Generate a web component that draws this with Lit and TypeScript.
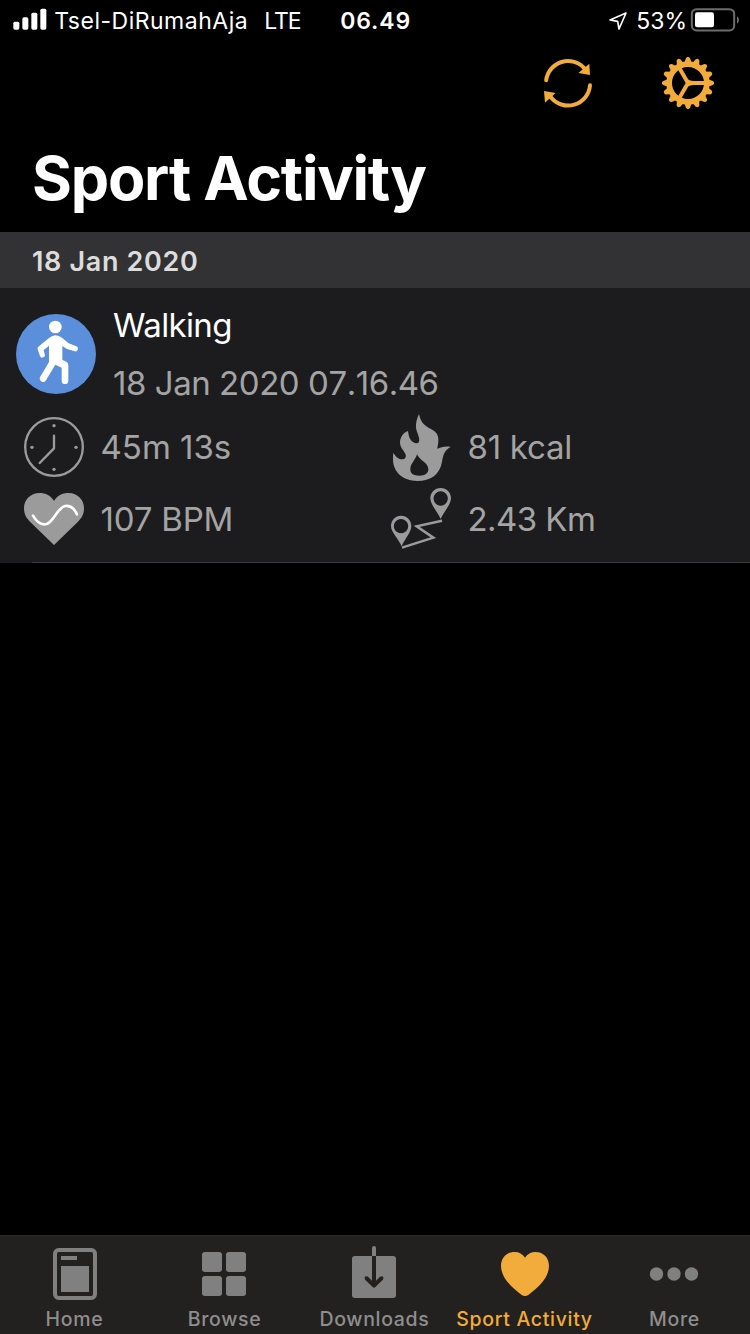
import { LitElement, html, svg, css } from "lit";
import { customElement } from "lit/decorators.js";

const gearPath = (() => {
  const cx = 504, cy = 114, n = 16;
  const pt = (r: number, deg: number) => {
    const a = (deg * Math.PI) / 180;
    return `${(cx + r * Math.cos(a)).toFixed(1)},${(cy + r * Math.sin(a)).toFixed(1)}`;
  };
  const out: string[] = [];
  for (let i = 0; i < n; i++) {
    const a = (i * 360) / n;
    out.push(pt(65, a - 8.5), pt(75, a - 4.6), pt(78, a - 1.5), pt(78, a + 1.5), pt(75, a + 4.6), pt(65, a + 8.5));
  }
  return `M${out.join("L")}Z M456,114 a48,48 0 1 0 96,0 a48,48 0 1 0 -96,0Z`;
})();

const icons = {
  signal: svg`<svg class="ic" width="34" height="24" viewBox="38 22 102 72" fill="#fff">
    <rect x="39" y="66" width="18" height="24" rx="5"/><rect x="66" y="53" width="18" height="37" rx="5"/>
    <rect x="93" y="39" width="18" height="51" rx="5"/><rect x="120" y="27" width="18" height="63" rx="5"/></svg>`,
  location: svg`<svg class="ic" width="22" height="22" viewBox="862 30 66 66" fill="none" stroke="#fff" stroke-width="5" stroke-linejoin="round">
    <path d="M871,60 L919,39 L898,87 L894,64Z"/></svg>`,
  battery: svg`<svg class="ic" width="50" height="26" viewBox="1110 20 150 78">
    <rect x="1115.500" y="26.500" width="127" height="64" rx="14" fill="none" stroke="#6c6c6c" stroke-width="6"/>
    <rect x="1125" y="36" width="57" height="45" rx="7" fill="#fff"/>
    <path d="M1251,48 q6,3 6,11 q0,8 -6,11Z" fill="#6c6c6c"/></svg>`,
  refresh: svg`<svg class="ic" width="56" height="56" viewBox="60 30 168 168" fill="none" stroke="#f2ac3c" stroke-width="12" stroke-linecap="round">
    <path d="M78.500,106 A66,66 0 0 1 194,71"/><path d="M210,121 A66,66 0 0 1 92,156"/>
    <path d="M208,56 L210,90 L175,84Z M72,138 L107,144 L75,173Z" fill="#f2ac3c" stroke="none"/></svg>`,
  gear: svg`<svg class="ic" width="56" height="56" viewBox="420 30 168 168">
    <path d="${gearPath}" fill="#f2ac3c" fill-rule="evenodd"/>
    <path d="M504,114 H556 M504,114 L478,69 M504,114 L478,159" stroke="#f2ac3c" stroke-width="12"/>
    <path d="M494,97 Q506,108 522,108 V120 Q506,120 494,131 Q502,114 494,97Z" fill="#f2ac3c"/></svg>`,
  walk: svg`<svg class="ic" width="80" height="80" viewBox="48 42 240 240">
    <circle cx="168" cy="162" r="120" fill="#5b8fdc"/><circle cx="166" cy="81" r="19" fill="#fff"/>
    <path d="M148,113 Q166,98 186,113 L206,130 L227,138 A8,8 0 0 1 224,154 L201,147 L187,138 V179 L200,186 Q205,189 205,196 V242 A10,10 0 0 1 185,242 V203 L166,194 L137,242 A10,10 0 0 1 120,232 L147,186 V137 L131,150 L134,162 A7.500,7.500 0 0 1 120,168 L113,148 Q111,144 115,140Z" fill="#fff"/></svg>`,
  clock: svg`<svg class="ic" width="60" height="60" viewBox="72 36 180 180" fill="none" stroke="#9b9b9b" stroke-width="7">
    <circle cx="162" cy="126" r="86.500"/><path d="M162,92 V130 L119,174" stroke-linecap="round" stroke-linejoin="round"/>
    <g fill="#9b9b9b" stroke="none"><circle cx="162" cy="62" r="5"/><circle cx="162" cy="193" r="5"/><circle cx="96" cy="127" r="5"/><circle cx="228" cy="127" r="5"/></g></svg>`,
  pulse: svg`<svg class="ic" width="60" height="52" viewBox="72 264 180 156">
    <path d="M162,288 C152,272 138,264 118,264 C91,264 72,285 72,309 C72,328 79,339 90,350 L162,420 L234,350 C245,339 252,328 252,309 C252,285 233,264 206,264 C186,264 172,272 162,288Z" fill="#9b9b9b"/>
    <path d="M99,332 C112,354 126,361 140,357 C163,349 171,308 196,303 C212,301 223,311 231,328" fill="none" stroke="#fff" stroke-width="8" stroke-linecap="round"/></svg>`,
  flame: svg`<svg class="ic" width="58" height="67" viewBox="68 27 174 201">
    <path fill-rule="evenodd" fill="#9b9b9b" d="M146,27 C151,50 160,60 176,69 C192,77 203,84 204,101 C205,113 202,121 201,131 C211,129 224,122 241,126 C222,136 219,149 215,170 C209,208 181,228 141,228 C98,228 68,202 68,163 C68,156 68,149 69,143 C75,154 84,163 96,163 C105,162 108,156 106,149 C102,137 90,130 89,114 C89,98 98,83 113,78 C115,88 115,97 122,106 C129,115 142,118 146,110 C150,101 139,81 137,69 C136,53 140,40 146,27Z M140,148 C137,163 120,175 120,193 C120,207 130,212 147,212 C164,212 174,205 174,193 C174,172 149,169 140,148Z"/></svg>`,
  route: svg`<svg class="ic" width="62" height="62" viewBox="60 246 186 186">
    <path fill="#9b9b9b" fill-rule="evenodd" d="M93,332 C111,332 124,346 124,363 C124,382 104,402 95,424 C86,402 63,382 63,363 C63,346 76,332 93,332Z M93,342 a21.500,21.500 0 1 0 .1,0Z M212,249 C230,249 243,263 243,280 C243,299 221,320 212,342 C203,320 181,299 181,280 C181,263 194,249 212,249Z M212,259 a21.500,21.500 0 1 0 .1,0Z"/>
    <path d="M216,347 L140,364 L190,398 L96,428" fill="none" stroke="#9b9b9b" stroke-width="7.500"/></svg>`,
  home: svg`<svg class="ic" width="60" height="56" viewBox="135 63 180 168">
    <rect x="165" y="75" width="120" height="144" rx="11" fill="none" stroke="#808080" stroke-width="12"/>
    <path d="M183,93h48v12h-48Z M183,123h84v78h-84Z" fill="#808080"/></svg>`,
  browse: svg`<svg class="ic" width="60" height="56" viewBox="585 63 180 168" fill="#808080">
    <rect x="606" y="81" width="60" height="60" rx="9"/><rect x="678" y="81" width="60" height="60" rx="9"/>
    <rect x="606" y="153" width="60" height="60" rx="9"/><rect x="678" y="153" width="60" height="60" rx="9"/></svg>`,
  downloads: svg`<svg class="ic" width="60" height="56" viewBox="135 63 180 168">
    <rect x="156" y="93" width="132" height="126" rx="9" fill="#808080"/><path d="M216,93 V68 q0,-5 6,-5 q6,0 6,5 V93Z" fill="#808080"/>
    <path d="M222,93 V181 M199,159 L222,182 L245,159" fill="none" stroke="#22211f" stroke-width="12" stroke-linejoin="round"/><path d="M199,159h.1M245,159h.1" stroke="#22211f" stroke-width="11" stroke-linecap="round"/></svg>`,
  heart: svg`<svg class="ic" width="60" height="56" viewBox="585 63 180 168">
    <path d="M675,98 C668,87 657,81 644,81 C618,81 603,100 603,122 C603,160 637,188 664,209 Q675,217 686,209 C713,188 747,160 747,122 C747,100 732,81 706,81 C693,81 682,87 675,98Z" fill="#f2ac3c"/></svg>`,
  more: svg`<svg class="ic" width="60" height="56" viewBox="135 63 180 168" fill="#808080">
    <circle cx="169.500" cy="147" r="20"/><circle cx="222" cy="147" r="20"/><circle cx="274.500" cy="147" r="20"/></svg>`,
};

@customElement("app-root")
export class AppRoot extends LitElement {
  static styles = css`
    :host { display: flex; flex-direction: column; width: 750px; height: 1334px; overflow: hidden; background: #000; color: #fff;
      font-family: Inter, "Liberation Sans", sans-serif; white-space: nowrap; }
    .ic { display: block; flex: none; }
    .status { display: flex; height: 40px; flex: none; font-size: 23px; line-height: 42px; box-sizing: border-box; padding-left: 12.7px; }
    .signal { padding-top: 7.300px; width: 41.500px; }
    .carrier { width: 210px; letter-spacing: 0.500px; }
    .net { width: 76px; letter-spacing: -1px; }
    .time { width: 266.500px; font-weight: 600; letter-spacing: 0.850px; }
    .loc { padding-top: 10px; width: 29.500px; }
    .pct { width: 53.500px; }
    .batt { padding-top: 6.700px; }
    .nav { display: flex; justify-content: flex-end; gap: 64px; height: 100px; flex: none; padding: 15px 34px 0 0; box-sizing: border-box; }
    .title { margin: 0; height: 92px; flex: none; padding-left: 32px; font-size: 61px; line-height: 76px; font-weight: 700; letter-spacing: -1.230px; }
    .section { height: 56px; flex: none; background: #323234; color: #dcdcdc; padding-left: 32px; font-size: 27px; line-height: 60px; font-weight: 600; letter-spacing: 0.650px; box-sizing: border-box; }
    .cell { height: 275px; flex: none; background: #1c1c1e; font-size: 33px; display: flex; flex-direction: column; }
    .head { display: flex; height: 123px; padding-left: 16px; gap: 17px; }
    .head > .ic { margin-top: 26px; }
    .names { padding-top: 8px; line-height: 58px; }
    .name { letter-spacing: -0.620px; }
    .sub { font-kerning: none; letter-spacing: -0.450px; }
    .sub, .metrics { color: #a4a4a4; }
    .metrics { display: grid; grid-template-columns: 367px 1fr; grid-template-rows: 72px 79px; flex: 1; }
    .metric { display: flex; line-height: 72px; }
    .slot { width: 100.500px; height: 72px; box-sizing: border-box; flex: none; }
    .clock { padding: 6px 0 0 24px; } .pulse { padding: 10px 0 0 24px; }
    .flame { padding: 3px 0 0 25.700px; } .route { padding: 4px 0 0 23px; }
    .flame-val { letter-spacing: -0.250px; }
    .pulse-val { letter-spacing: -0.200px; }
    .route-val { letter-spacing: -0.550px; }
    .rule { height: 1px; margin-left: 32px; background: #3d3d40; }
    .space { flex: 1; }
    .tabs { display: grid; grid-template-columns: repeat(5, 150px); height: 99px; flex: none; background: #22211f; box-sizing: border-box; border-top: 1px solid #2a2927; }
    .tab { display: flex; flex-direction: column; align-items: center; padding-top: 10px; color: #8e8e8e; font-size: 19.500px; line-height: 32px; font-weight: 450; letter-spacing: 0.680px; }
    .label { padding: 1px 1px 0 0; }
    .active { color: #f2ac3c; }
  `;

  private metrics = [
    { icon: "clock", text: "45m 13s" },
    { icon: "flame", text: "81 kcal" },
    { icon: "pulse", text: "107 BPM" },
    { icon: "route", text: "2.43 Km" },
  ];
  private tabs = [
    { icon: "home", text: "Home" },
    { icon: "browse", text: "Browse" },
    { icon: "downloads", text: "Downloads" },
    { icon: "heart", text: "Sport Activity" },
    { icon: "more", text: "More" },
  ];

  render() {
    return html`
      <div class="status">
        <div class="signal">${icons.signal}</div>
        <div class="carrier">Tsel-DiRumahAja</div>
        <div class="net">LTE</div>
        <div class="time">06.49</div>
        <div class="loc">${icons.location}</div>
        <div class="pct">53%</div>
        <div class="batt">${icons.battery}</div>
      </div>
      <div class="nav">${icons.refresh}${icons.gear}</div>
      <h1 class="title">Sport Activity</h1>
      <div class="section">18 Jan 2020</div>
      <div class="cell">
        <div class="head">
          ${icons.walk}
          <div class="names"><div class="name">Walking</div><div class="sub">18 Jan 2020 07.16.46</div></div>
        </div>
        <div class="metrics">
          ${this.metrics.map((m) => html`<div class="metric"><div class="slot ${m.icon}">${icons[m.icon]}</div><span class="${m.icon}-val">${m.text}</span></div>`)}
        </div>
        <div class="rule"></div>
      </div>
      <div class="space"></div>
      <div class="tabs">
        ${this.tabs.map((t) => html`<div class="tab ${t.icon === "heart" ? "active" : ""}">${icons[t.icon]}<span class="label">${t.text}</span></div>`)}
      </div>
    `;
  }
}
